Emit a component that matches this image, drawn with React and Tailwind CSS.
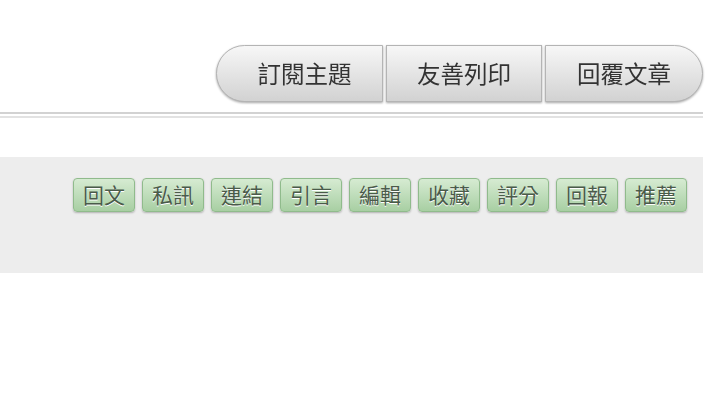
import React from 'react';

const topActions = ['訂閱主題', '友善列印', '回覆文章'];
const postActions = ['回文', '私訊', '連結', '引言', '編輯', '收藏', '評分', '回報', '推薦'];

const font = { fontFamily: '"Noto Sans CJK TC", "Noto Sans", sans-serif' };

export default function App() {
  return (
    <div className="w-[720px] h-[412px] bg-white overflow-hidden" style={font}>
      <div className="w-[703px]">
        {/* top action group */}
        <div className="flex justify-end pt-[45px]">
          <div className="flex gap-[3px] drop-shadow-[0_1px_1px_rgba(0,0,0,0.35)]">
            {topActions.map((label, i) => (
              <button
                key={label}
                className={`h-[57px] flex items-center justify-center text-[23.5px] text-[#333] border border-[#b4b4b4] bg-gradient-to-b from-[#f7f7f7] to-[#d2d2d2] ${
                  i === 0 ? 'w-[167px] rounded-l-full pl-[10px]' : i === 2 ? 'w-[158px] rounded-r-full' : 'w-[156px]'
                }`}
              >
                {label}
              </button>
            ))}
          </div>
        </div>

        {/* double rule */}
        <div className="mt-[10px] h-[6px] border-t-2 border-b-2 border-t-[#d2d2d2] border-b-[#e2e2e2]" />

        {/* post toolbar */}
        <div className="mt-[39px] h-[116px] bg-[#ededed] flex justify-end items-start pt-[21px] pr-[16px] gap-[7px]">
          {postActions.map((label) => (
            <button
              key={label}
              className="w-[62px] h-[34px] flex items-center justify-center rounded-[4px] border border-[#90bb8c] bg-gradient-to-b from-[#d6ebd2] to-[#a8cfa3] text-[21px] text-[#4a5b4a] shadow-[0_1px_2px_rgba(0,0,0,0.25)] [text-shadow:0_1px_0_#ffffff]"
            >
              {label}
            </button>
          ))}
        </div>
      </div>
    </div>
  );
}
